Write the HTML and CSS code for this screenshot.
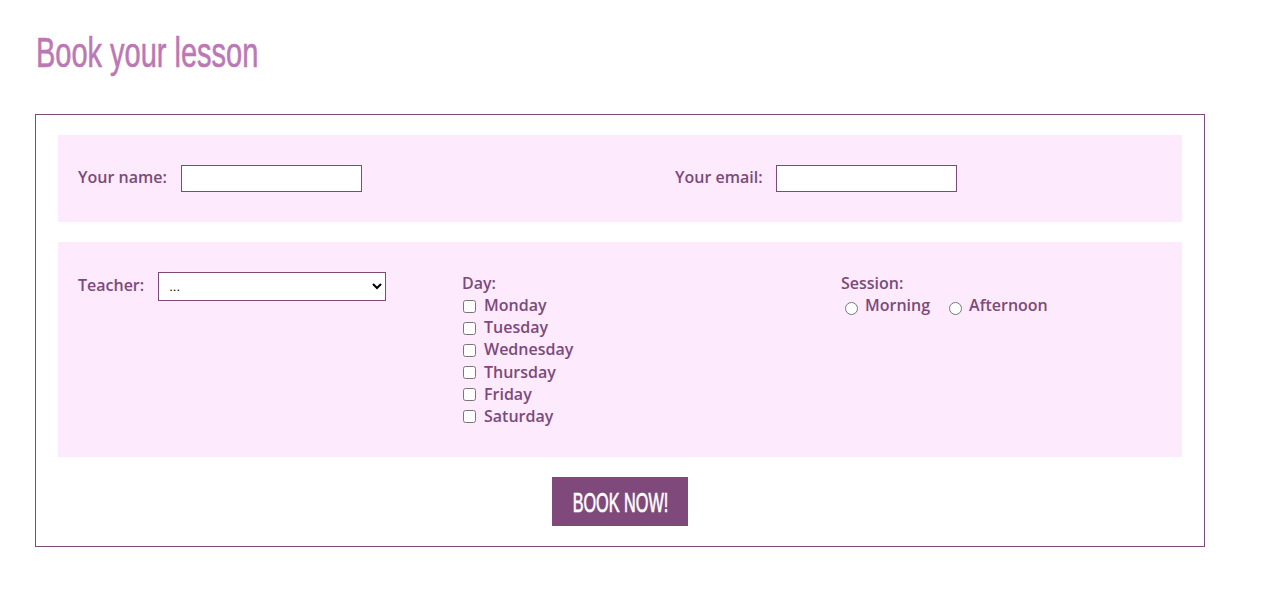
FILE: index.html
```html
<!DOCTYPE html>
<html lang="en">
<head>
<meta charset="utf-8">
<title>Book your lesson</title>
<link rel="stylesheet" href="styles.css">
</head>
<body>
<main class="page">
  <h1 class="title"><span class="title-text">Book your lesson</span></h1>
  <form class="booking">
    <div class="panel panel-contact">
      <div class="field">
        <label class="label" for="name">Your name:</label>
        <input class="text-input" id="name" type="text">
      </div>
      <div class="field field-email">
        <label class="label" for="email">Your email:</label>
        <input class="text-input" id="email" type="email">
      </div>
    </div>
    <div class="panel panel-options">
      <div class="field field-teacher">
        <label class="label" for="teacher">Teacher:</label>
        <select class="select" id="teacher">
          <option>...</option>
        </select>
      </div>
      <div class="group">
        <div class="label">Day:</div>
        <label class="check"><input type="checkbox" class="box">Monday</label>
        <label class="check"><input type="checkbox" class="box">Tuesday</label>
        <label class="check"><input type="checkbox" class="box">Wednesday</label>
        <label class="check"><input type="checkbox" class="box">Thursday</label>
        <label class="check"><input type="checkbox" class="box">Friday</label>
        <label class="check"><input type="checkbox" class="box">Saturday</label>
      </div>
      <div class="group">
        <div class="label">Session:</div>
        <div class="radios">
          <label class="radio"><input type="radio" name="session" class="dot">Morning</label>
          <label class="radio"><input type="radio" name="session" class="dot">Afternoon</label>
        </div>
      </div>
    </div>
    <div class="actions">
      <button type="button" class="submit"><span class="submit-text">BOOK NOW!</span></button>
    </div>
  </form>
</main>
</body>
</html>
```
FILE: styles.css
```css
html, body {
  margin: 0;
  padding: 0;
  background: #ffffff;
}

.page {
  padding: 0 0 0 35px;
  width: 1170px;
}

.title {
  margin: 28px 0 36px 1px;
  height: 50px;
  line-height: 50px;
  font-family: "Liberation Sans", sans-serif;
  font-weight: normal;
  font-size: 42px;
  color: #bb78b5;
  white-space: nowrap;
}

.title-text {
  display: inline-block;
  transform: scaleX(0.69);
  transform-origin: left center;
  -webkit-text-stroke: 0.6px #bb78b5;
}

.booking {
  border: 1px solid #7e4a7c;
  padding: 20px 22px;
  display: flex;
  flex-direction: column;
  gap: 20px;
  font-family: "Open Sans", sans-serif;
  font-weight: 600;
  font-size: 16px;
  line-height: 22.15px;
  color: #7b4a7b;
}

.panel {
  background: #fdeafd;
  padding: 30px 20px;
  display: grid;
}

.panel-contact {
  grid-template-columns: 597px 1fr;
}

.panel-options {
  grid-template-columns: 384px 379px 1fr;
  align-items: start;
}

.field {
  display: flex;
  align-items: center;
  gap: 14px;
}

.field-email {
  gap: 13px;
}

.field .label {
  padding-bottom: 2px;
}

.text-input {
  box-sizing: border-box;
  width: 181px;
  height: 27px;
  margin: 0;
  border: 1px solid #7e4a7c;
  background: #ffffff;
  padding: 0 4px;
  font-family: "Open Sans", sans-serif;
  font-size: 13px;
}

.select {
  box-sizing: border-box;
  width: 228px;
  height: 29px;
  margin: 0;
  border: 1px solid #7e4a7c;
  border-radius: 0;
  background: #ffffff;
  padding: 0 6px;
  font-family: "Liberation Sans", sans-serif;
  font-size: 13px;
  color: #000000;
}

.group {
  display: flex;
  flex-direction: column;
}

.check {
  display: flex;
  align-items: center;
  height: 22.15px;
}

.box {
  width: 13px;
  height: 13px;
  margin: 2px 8px 0 1px;
}

.radios {
  display: flex;
  height: 22px;
  align-items: center;
}

.radio {
  display: flex;
  align-items: center;
  margin-right: 15px;
}

.dot {
  width: 13px;
  height: 13px;
  margin: 6px 7px 0 4px;
}

.actions {
  display: flex;
  justify-content: center;
}

.submit {
  width: 136px;
  height: 49px;
  margin: 0;
  border: none;
  border-radius: 0;
  background: #7f4a7b;
  color: #ffffff;
  font-family: "Liberation Sans", sans-serif;
  font-size: 28px;
  padding: 3px 0 0 0;
  display: flex;
  align-items: center;
  justify-content: center;
  overflow: hidden;
}

.submit-text {
  display: inline-block;
  transform: scaleX(0.58);
  -webkit-text-stroke: 0.7px #ffffff;
  white-space: nowrap;
}
```
